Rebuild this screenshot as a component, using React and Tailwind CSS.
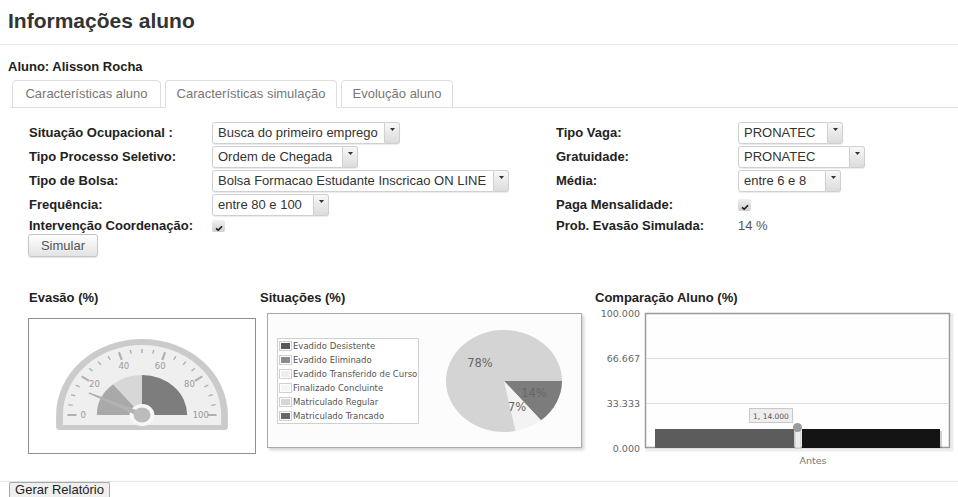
import React from 'react';

const LEFT_ROWS = [
  { label: 'Situação Ocupacional :', kind: 'select', value: 'Busca do primeiro emprego', w: 'w-[173px]' },
  { label: 'Tipo Processo Seletivo:', kind: 'select', value: 'Ordem de Chegada', w: 'w-[131px]' },
  { label: 'Tipo de Bolsa:', kind: 'select', value: 'Bolsa Formacao Estudante Inscricao ON LINE', w: 'w-[282px]' },
  { label: 'Frequência:', kind: 'select', value: 'entre 80 e 100', w: 'w-[102px]' },
  { label: 'Intervenção Coordenação:', kind: 'check' },
];

const RIGHT_ROWS = [
  { label: 'Tipo Vaga:', kind: 'select', value: 'PRONATEC', w: 'w-[90px]' },
  { label: 'Gratuidade:', kind: 'select', value: 'PRONATEC', w: 'w-[112px]' },
  { label: 'Média:', kind: 'select', value: 'entre 6 e 8', w: 'w-[88px]' },
  { label: 'Paga Mensalidade:', kind: 'check' },
  { label: 'Prob. Evasão Simulada:', kind: 'text', value: '14 %' },
];

const LEGEND = [
  { label: 'Evadido Desistente', color: 'bg-[#5a5a5a]' },
  { label: 'Evadido Eliminado', color: 'bg-[#8a8a8a]' },
  { label: 'Evadido Transferido de Curso', color: 'bg-[#efefef]' },
  { label: 'Finalizado Concluinte', color: 'bg-[#f6f6f6]' },
  { label: 'Matriculado Regular', color: 'bg-[#d6d6d6]' },
  { label: 'Matriculado Trancado', color: 'bg-[#666666]' },
];

const TABS = [
  { label: 'Características aluno', w: 'w-[149px]' },
  { label: 'Características simulação', w: 'w-[172px]', active: true },
  { label: 'Evolução aluno', w: 'w-[112px]' },
];

function Combo({ value, w }) {
  return (
    <div className="flex h-[22px] rounded-[3px] shadow-[0_1px_1px_rgba(0,0,0,0.08)]">
      <div className={`flex items-center overflow-hidden whitespace-nowrap rounded-l-[3px] border border-[#d0d0d0] bg-white pl-[5px] text-[13px] text-[#333] ${w}`}>
        {value}
      </div>
      <div className="flex w-[15px] justify-center rounded-r-[3px] border border-l-0 border-[#d0d0d0] bg-linear-to-b from-[#f8f8f8] to-[#dcdcdc] pt-[5px]">
        <svg width="5" height="3" viewBox="0 0 5 3">
          <polygon points="0,0 5,0 2.5,3" fill="#333" />
        </svg>
      </div>
    </div>
  );
}

function Tick() {
  return (
    <span className="flex h-[12px] w-[13px] items-end justify-center rounded-[2px] bg-linear-to-b from-[#f0f0f0] to-[#cfcfcf] pb-[1px]">
      <svg width="8" height="6" viewBox="0 0 8 6">
        <path d="M1 3.4 L3.2 5.2 L7 1.2" stroke="#1a1a1a" strokeWidth="1.6" fill="none" />
      </svg>
    </span>
  );
}

function Field({ row }) {
  if (row.kind === 'select') return <Combo value={row.value} w={row.w} />;
  if (row.kind === 'check') return <Tick />;
  return <span className="text-[13px] text-[#555]">{row.value}</span>;
}

// half-dial gauge, drawn a bit wider than tall like the jqPlot meter
function Gauge() {
  const pt = (v, r) => {
    const a = Math.PI * (1 - v / 100);
    return [r * Math.cos(a), -r * Math.sin(a)];
  };
  const sector = (v0, v1, r) => {
    const [x0, y0] = pt(v0, r);
    const [x1, y1] = pt(v1, r);
    return `M0 0 L${x0} ${y0} A${r} ${r} 0 0 1 ${x1} ${y1} Z`;
  };
  const ticks = [];
  for (let v = 0; v <= 100; v += 5) {
    const major = v % 20 === 0;
    const [x0, y0] = pt(v, major ? 58 : 62);
    const [x1, y1] = pt(v, 66);
    ticks.push(
      <line key={v} x1={x0} y1={y0} x2={x1} y2={y1} stroke="#b0b0b0" strokeWidth={major ? 2 : 1.3} />
    );
  }
  const a = Math.PI * (1 - 0.14);
  const ux = Math.cos(a);
  const uy = -Math.sin(a);
  const px = -uy;
  const py = ux;
  const needle = [
    [px * 2.6, py * 2.6],
    [ux * 52 + px * 0.8, uy * 52 + py * 0.8],
    [ux * 52 - px * 0.8, uy * 52 - py * 0.8],
    [-px * 2.6, -py * 2.6],
  ]
    .map((p) => p.join(','))
    .join(' ');
  const labels = [0, 20, 40, 60, 80, 100].map((v) => {
    const [x, y] = pt(v, 52);
    return (
      <text key={v} x={113 + x * 1.13} y={96 + y + 3} textAnchor="middle" fontSize="8.5" fill="#9a9a9a" fontFamily="DejaVu Sans, sans-serif">
        {v}
      </text>
    );
  });

  return (
    <svg width="226" height="134" viewBox="0 0 226 134">
      <g transform="translate(113 96) scale(1.13 1)">
        <path d="M-76 0 A76 76 0 0 1 76 0 L76 12 Q76 15 73 15 L-73 15 Q-76 15 -76 12 Z" fill="#cbcbcb" />
        <path d="M-70 0 A70 70 0 0 1 70 0 L70 10 L-70 10 Z" fill="#efefef" />
        <path d={sector(0, 28, 40)} fill="#a9a9a9" />
        <path d={sector(28, 50, 40)} fill="#d7d7d7" />
        <path d={sector(50, 100, 40)} fill="#7d7d7d" />
        {ticks}
        <circle r="11" fill="#f7f7f7" />
        <polygon points={needle} fill="#b2b2b2" />
        <circle r="7.5" fill="#bcbcbc" />
      </g>
      {labels}
    </svg>
  );
}

function Pie() {
  const slices = [
    { v: 14, c: '#7c7c7c' },
    { v: 7.8, c: '#f3f3f3' },
    { v: 78.2, c: '#d4d4d4' },
  ];
  let start = 0;
  const r = 51;
  const paths = slices.map((s, i) => {
    const end = start + (s.v / 100) * 360;
    const a0 = (start * Math.PI) / 180;
    const a1 = (end * Math.PI) / 180;
    const d = `M0 0 L${r * Math.cos(a0)} ${r * Math.sin(a0)} A${r} ${r} 0 ${end - start > 180 ? 1 : 0} 1 ${r * Math.cos(a1)} ${r * Math.sin(a1)} Z`;
    start = end;
    return <path key={i} d={d} fill={s.c} />;
  });
  const lbl = { fontSize: 11.5, fill: '#666', fontFamily: 'DejaVu Sans, sans-serif', textAnchor: 'middle' };
  return (
    <svg width="140" height="112" viewBox="0 0 140 112" className="ml-[15px]">
      <g transform="translate(70 56) scale(1.137 1)">{paths}</g>
      <text x={70 - 24} y={56 - 18 + 4} {...lbl}>78%</text>
      <text x={70 + 30} y={56 + 12 + 4} {...lbl}>14%</text>
      <text x={70 + 13} y={56 + 26 + 4} {...lbl}>7%</text>
    </svg>
  );
}

function Bars() {
  const axis = { fontSize: 9.5, fill: '#666', fontFamily: 'DejaVu Sans, sans-serif' };
  const ticks = [
    { y: 7, t: '100.000' },
    { y: 52, t: '66.667' },
    { y: 97, t: '33.333' },
    { y: 142, t: '0.000' },
  ];
  return (
    <svg width="363" height="165" viewBox="0 0 363 165">
      <rect x="52" y="9" width="305" height="135" fill="none" stroke="#000" strokeOpacity="0.07" strokeWidth="3" />
      <rect x="50.5" y="7.5" width="304" height="134" fill="#fefefe" stroke="#9a9a9a" strokeWidth="1.5" />
      <line x1="51" x2="354" y1="52.5" y2="52.5" stroke="#dcdcdc" />
      <line x1="51" x2="354" y1="97.5" y2="97.5" stroke="#dcdcdc" />
      {ticks.map((k) => (
        <text key={k.t} x="45" y={k.y + 3.5} textAnchor="end" {...axis}>
          {k.t}
        </text>
      ))}
      <rect x="62" y="125" width="139" height="17" fill="#000" opacity="0.15" />
      <rect x="60" y="123" width="139" height="19" fill="#5c5c5c" />
      <rect x="209" y="125" width="138" height="17" fill="#000" opacity="0.18" />
      <rect x="207" y="123" width="138" height="19" fill="#141414" />
      <rect x="200" y="123" width="6" height="19" fill="#ececec" stroke="#b0b0b0" strokeWidth="0.6" />
      <circle cx="202.5" cy="121.5" r="4.5" fill="#9b9b9b" />
      <rect x="154.5" y="102.5" width="43" height="14" fill="#eeeeee" stroke="#c8c8c8" />
      <text x="176" y="112.5" textAnchor="middle" fontSize="7.5" fill="#555" fontFamily="DejaVu Sans, sans-serif">
        1, 14.000
      </text>
      <text x="218" y="158" textAnchor="middle" {...axis} fill="#777">
        Antes
      </text>
    </svg>
  );
}

export default function App() {
  return (
    <div className="min-h-screen w-[958px] bg-white font-['Liberation_Sans',Arial,sans-serif] text-[#333]">
      <h2 className="px-[8px] pt-[9px] text-[21px] font-bold leading-[24px] text-[#333]">Informações aluno</h2>
      <div className="mt-[11px] border-t border-[#e6e6e6]" />

      <div className="mt-[14px] px-[8px] text-[13px] font-bold leading-[16px] text-[#222]">Aluno: Alisson Rocha</div>

      <div className="ml-[10px] mt-[5px] flex h-[28px] items-end gap-[4px] border-b border-[#ddd] pl-[2px]">
        {TABS.map((t) => (
          <div
            key={t.label}
            className={`mb-[-1px] flex h-[28px] items-center justify-center rounded-t-[4px] border border-[#ddd] bg-white text-[13px] text-[#777] ${t.w} ${t.active ? 'border-b-white' : ''}`}
          >
            {t.label}
          </div>
        ))}
      </div>

      <div className="mt-[13px] grid grid-cols-[183px_344px_182px_1fr] grid-rows-[24px_24px_24px_24px_17px] pl-[29px]">
        {LEFT_ROWS.map((row, i) => (
          <React.Fragment key={row.label}>
            <div className="flex items-center text-[13px] font-bold text-[#222]">{row.label}</div>
            <div className="flex items-center">
              <Field row={row} />
            </div>
            <div className="flex items-center text-[13px] font-bold text-[#222]">{RIGHT_ROWS[i].label}</div>
            <div className="flex items-center">
              <Field row={RIGHT_ROWS[i]} />
            </div>
          </React.Fragment>
        ))}
      </div>

      <button className="ml-[28px] flex h-[23px] w-[70px] items-center justify-center rounded-[3px] border border-[#c5c5c5] bg-linear-to-b from-white to-[#e3e3e3] text-[13px] text-[#555] shadow-[0_1px_1px_rgba(0,0,0,0.1)]">
        Simular
      </button>

      <div className="mt-[33px] flex h-[191px]">
        <div className="ml-[28px] w-[232px]">
          <div className="pl-[1px] text-[13px] font-bold leading-[16px] text-[#222]">Evasão (%)</div>
          <div className="mt-[12px] h-[136px] w-[228px] border border-[#8f8f8f] bg-white">
            <Gauge />
          </div>
        </div>

        <div className="w-[335px]">
          <div className="text-[13px] font-bold leading-[16px] text-[#222]">Situações (%)</div>
          <div className="ml-[7px] mt-[7px] flex h-[135px] w-[315px] items-center border border-[#a9a9a9] bg-[#fcfcfc] pl-[9px] shadow-[2px_2px_3px_rgba(0,0,0,0.18)]">
            <div className="border border-[#d0d0d0] bg-white">
              {LEGEND.map((l) => (
                <div key={l.label} className="flex h-[14px] items-center">
                  <span className="ml-[1px] flex h-[10px] w-[13px] border border-[#d0d0d0] p-[1px]">
                    <span className={`h-full w-full ${l.color}`} />
                  </span>
                  <span className="ml-[1px] pr-[1px] font-['DejaVu_Sans',sans-serif] text-[8.5px] leading-[14px] text-[#555]">
                    {l.label}
                  </span>
                </div>
              ))}
            </div>
            <Pie />
          </div>
        </div>

        <div>
          <div className="text-[13px] font-bold leading-[16px] text-[#222]">Comparação Aluno (%)</div>
          <Bars />
        </div>
      </div>

      <div className="border-t border-[#e5e5e5]" />
      <button className="ml-[9px] flex h-[15px] w-[101px] items-start justify-center rounded-t-[2px] border border-b-0 border-[#a6a6a6] bg-[#efefef] text-[13px] leading-[13px] text-[#222]">
        Gerar Relatório
      </button>
    </div>
  );
}
